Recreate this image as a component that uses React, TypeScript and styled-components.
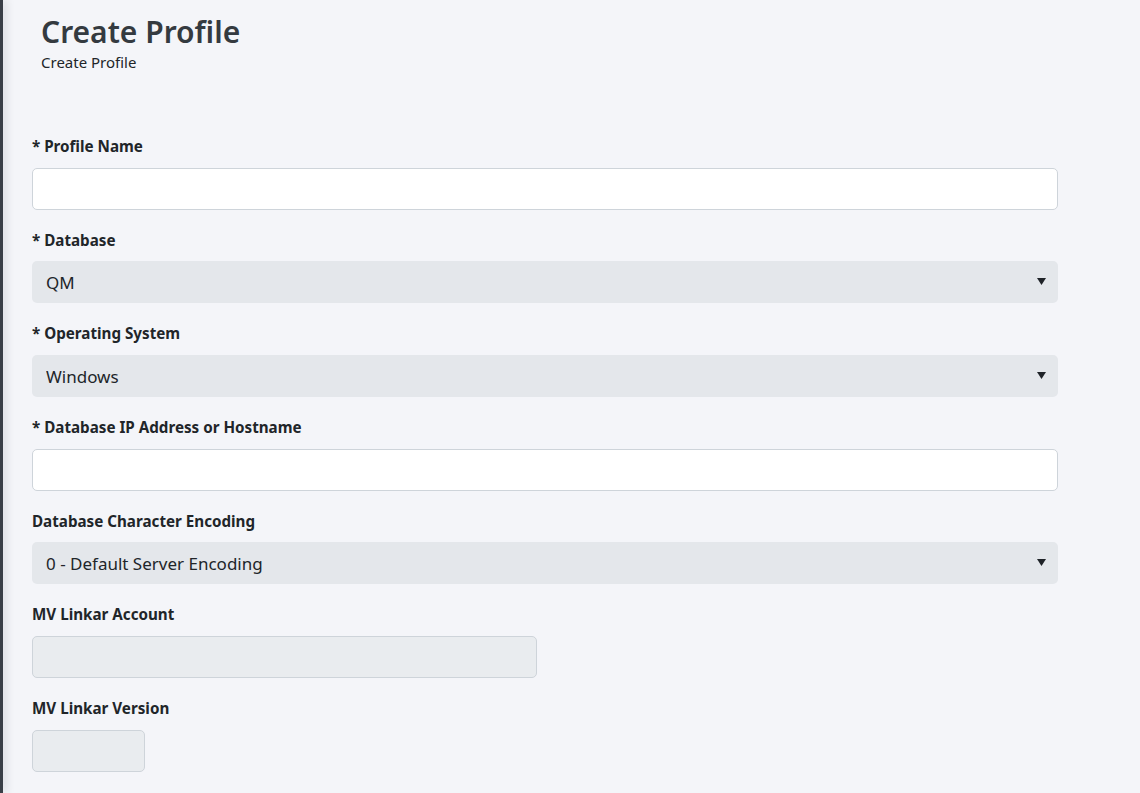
import React from "react";
import styled, { createGlobalStyle } from "styled-components";

const Global = createGlobalStyle`
  html, body { margin: 0; padding: 0; background: #f4f5f9; }
  body { font-family: "Noto Sans", "Open Sans", Arial, sans-serif; color: #212529; }
  * { box-sizing: border-box; }
`;

const Page = styled.div`
  display: flex;
  min-height: 793px;
  background: #f4f5f9;
`;

const EdgeStrip = styled.div`
  width: 3px;
  flex: none;
  background: #3a3f47;
  box-shadow: 2px 0 8px rgba(40, 44, 52, 0.25);
`;

const Main = styled.main`
  flex: 1;
  padding: 12px 0 0 29px;
`;

const Header = styled.header`
  padding-left: 9px;
  margin-bottom: 64px;
`;

const Title = styled.h1`
  margin: 0;
  font-size: 30px;
  font-weight: 600;
  line-height: 40px;
  color: #343a40;
`;

const Subtitle = styled.div`
  font-size: 15px;
  line-height: 20px;
  color: #212529;
`;

const Form = styled.form`
  width: 1026px;
  display: flex;
  flex-direction: column;
  gap: 20px;
`;

const Group = styled.div`
  display: flex;
  flex-direction: column;
  gap: 10px;
`;

const Label = styled.label`
  font-size: 15.2px;
  font-weight: 700;
  line-height: 21.67px;
  color: #212529;
`;

const TextInput = styled.input<{ $width?: number }>`
  display: block;
  width: ${(p) => (p.$width ? `${p.$width}px` : "100%")};
  height: 42px;
  border: 1px solid #ced4da;
  border-radius: 5px;
  background: ${(p) => (p.disabled ? "#e9ecef" : "#ffffff")};
  font: inherit;
  font-size: 16px;
  padding: 0 14px;
  outline: none;
`;

const SelectWrap = styled.div`
  position: relative;
  width: 100%;
  height: 42px;
`;

const Select = styled.select`
  display: block;
  appearance: none;
  -webkit-appearance: none;
  width: 100%;
  height: 42px;
  border: none;
  border-radius: 5px;
  background: #e4e7eb;
  font-family: inherit;
  font-size: 17px;
  color: #212529;
  padding: 0 14px;
  outline: none;
`;

const Caret = styled.svg`
  position: absolute;
  right: 12px;
  top: 17px;
  width: 9px;
  height: 7px;
  pointer-events: none;
`;

const SelectField = ({ value }: { value: string }) => (
  <SelectWrap>
    <Select defaultValue={value}>
      <option>{value}</option>
    </Select>
    <Caret viewBox="0 0 9 7">
      <path d="M0 0 H9 L4.5 7 Z" fill="#1f2328" />
    </Caret>
  </SelectWrap>
);

export default function App() {
  return (
    <>
      <Global />
      <Page>
        <EdgeStrip />
        <Main>
          <Header>
            <Title>Create Profile</Title>
            <Subtitle>Create Profile</Subtitle>
          </Header>
          <Form>
            <Group>
              <Label>* Profile Name</Label>
              <TextInput type="text" />
            </Group>
            <Group>
              <Label>* Database</Label>
              <SelectField value="QM" />
            </Group>
            <Group>
              <Label>* Operating System</Label>
              <SelectField value="Windows" />
            </Group>
            <Group>
              <Label>* Database IP Address or Hostname</Label>
              <TextInput type="text" />
            </Group>
            <Group>
              <Label>Database Character Encoding</Label>
              <SelectField value="0 - Default Server Encoding" />
            </Group>
            <Group>
              <Label>MV Linkar Account</Label>
              <TextInput type="text" disabled $width={505} />
            </Group>
            <Group>
              <Label>MV Linkar Version</Label>
              <TextInput type="text" disabled $width={113} />
            </Group>
          </Form>
        </Main>
      </Page>
    </>
  );
}
